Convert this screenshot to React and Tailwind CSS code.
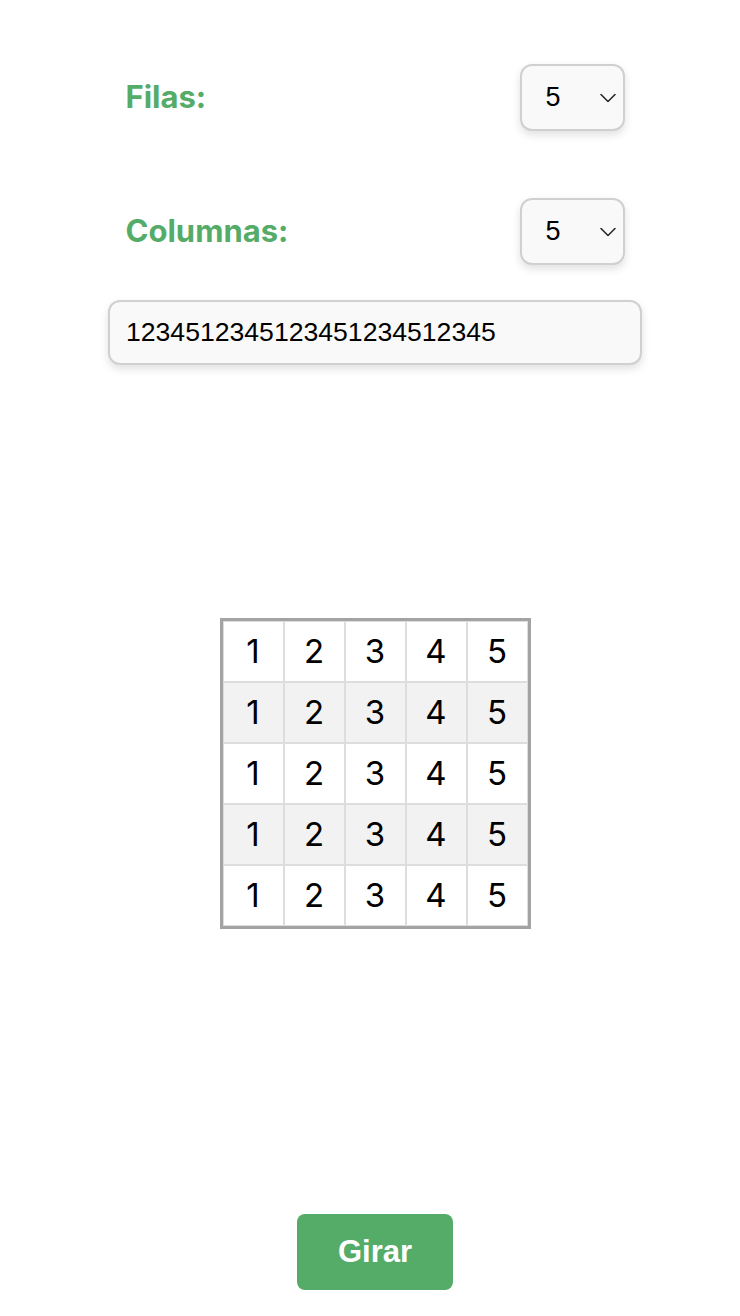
import React from "react";

function Chevron() {
  return (
    <svg
      className="pointer-events-none absolute right-[9px] top-1/2 -translate-y-1/2"
      width="16"
      height="9"
      viewBox="0 0 16 9"
      fill="none"
    >
      <path d="M1 1l7 7 7-7" stroke="#222" strokeWidth="1.5" strokeLinecap="round" strokeLinejoin="round" />
    </svg>
  );
}

function Row({ label, className }) {
  return (
    <div className={"flex w-[499px] items-center justify-between " + (className || "")}>
      <span className="text-[31px] font-bold text-[#55ac69] [font-family:Inter,'Noto_Sans',sans-serif]">
        {label}
      </span>
      <div className="relative h-[67px] w-[105px]">
        <select
          defaultValue="5"
          className="h-full w-full appearance-none rounded-xl border-2 border-[#d0d0d0] bg-[#f9f9f9] pl-[24px] text-[27px] text-black shadow-[0_4px_8px_rgba(0,0,0,0.12)] outline-none [font-family:'Liberation_Sans',Arial,sans-serif]"
        >
          {[1, 2, 3, 4, 5, 6, 7, 8, 9, 10].map((n) => (
            <option key={n} value={String(n)}>
              {n}
            </option>
          ))}
        </select>
        <Chevron />
      </div>
    </div>
  );
}

export default function App() {
  const rows = [0, 1, 2, 3, 4];
  const cols = [1, 2, 3, 4, 5];
  return (
    <div className="min-h-[1316px] w-[740px] bg-white pl-[10px]">
      <div className="flex flex-col items-center pt-[64px]">
        <Row label="Filas:" />
        <Row label="Columnas:" className="mt-[67px]" />
        <input
          type="text"
          defaultValue="1234512345123451234512345"
          className="mt-[35px] h-[65px] w-[534px] rounded-xl border-2 border-[#d0d0d0] bg-[#f9f9f9] pl-[16px] text-[26.6px] text-black shadow-[0_4px_8px_rgba(0,0,0,0.12)] outline-none [font-family:'Liberation_Sans',Arial,sans-serif]"
        />
        <div className="mt-[253px] border-[3px] border-[#a3a3a3]">
          {rows.map((r) => (
            <div key={r} className={"flex " + (r % 2 === 1 ? "bg-[#f2f2f2]" : "bg-white")}>
              {cols.map((c) => (
                <div
                  key={c}
                  className="flex h-[61px] w-[61px] items-center justify-center border border-[#dddddd] text-[33px] text-black [font-family:Inter,'Noto_Sans',sans-serif]"
                >
                  {c}
                </div>
              ))}
            </div>
          ))}
        </div>
        <button
          type="button"
          className="mt-[285px] h-[76px] w-[156px] rounded-lg bg-[#55ac69] text-[31px] font-bold text-white [font-family:'Liberation_Sans',Arial,sans-serif]"
        >
          Girar
        </button>
      </div>
    </div>
  );
}
